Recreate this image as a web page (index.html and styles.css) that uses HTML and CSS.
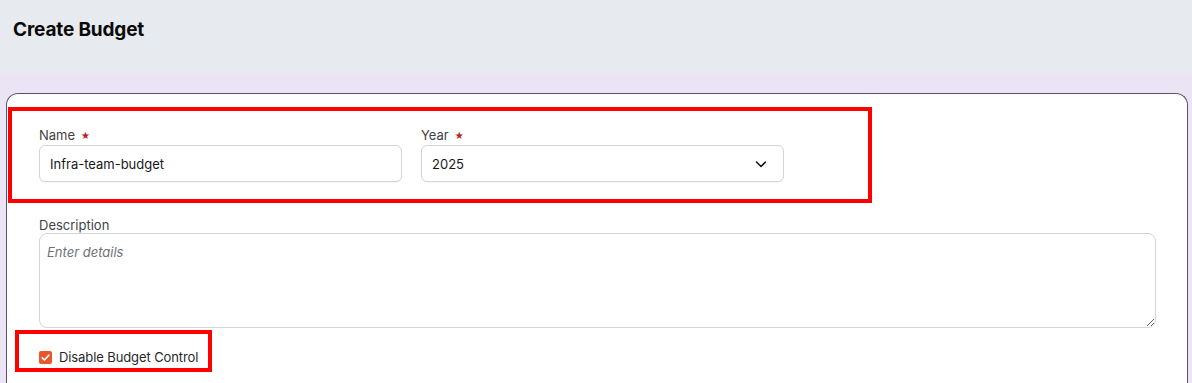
FILE: index.html
```html
<!DOCTYPE html>
<html lang="en">
<head>
<meta charset="utf-8">
<title>Create Budget</title>
<link rel="stylesheet" href="styles.css">
</head>
<body>
<header class="page-header">
  <h1 class="page-title">Create Budget</h1>
</header>
<main class="page-main">
  <section class="card">
    <div class="row">
      <div class="field">
        <label class="label">Name <span class="req">★</span></label>
        <input class="input" type="text" value="Infra-team-budget">
      </div>
      <div class="field">
        <label class="label">Year <span class="req">★</span></label>
        <div class="select">
          <span class="select-value">2025</span>
          <svg class="chevron" width="14" height="14" viewBox="0 0 14 14"><path d="M2.5 5 L7 9.5 L11.5 5" fill="none" stroke="#18181b" stroke-width="1.6" stroke-linecap="round" stroke-linejoin="round"/></svg>
        </div>
      </div>
    </div>
    <div class="field field-desc">
      <label class="label">Description</label>
      <textarea class="textarea" placeholder="Enter details"></textarea>
    </div>
    <label class="check">
      <span class="box"><svg width="13" height="13" viewBox="0 0 13 13"><path d="M3.2 6.8 L5.4 9 L9.8 4.2" fill="none" stroke="#fff" stroke-width="1.7" stroke-linecap="round" stroke-linejoin="round"/></svg></span>
      <span class="check-text">Disable Budget Control</span>
    </label>
    <div class="mark mark-1"></div>
    <div class="mark mark-2"></div>
  </section>
</main>
</body>
</html>
```

FILE: styles.css
```css
* { box-sizing: border-box; }
html, body { margin: 0; padding: 0; }
body {
  font-family: Inter, "Noto Sans", sans-serif;
  background: #ebe4f4;
  height: 383px;
  overflow: hidden;
}
.page-header {
  background: #e7eaee;
  height: 73px;
  padding: 18px 13px 0;
}
.page-title {
  margin: 0;
  font-size: 19px;
  font-weight: 700;
  letter-spacing: -0.15px;
  color: #0a0a0a;
}
.page-main {
  padding: 20px 4px 0 6px;
}
.card {
  position: relative;
  background: #fff;
  border: 1px solid #5d5070;
  border-bottom: none;
  border-radius: 12px 12px 0 0;
  height: 290px;
  padding: 33px 31px 0 32px;
}
.row {
  display: grid;
  grid-template-columns: 363px 363px;
  column-gap: 19px;
}
.field { display: flex; flex-direction: column; }
.label {
  font-size: 13px;
  line-height: 16px;
  color: #3f3f46;
  margin-bottom: 0;
}
.req {
  color: #b42318;
  font-size: 9px;
  position: relative;
  top: -1px;
  margin-left: 2px;
}
.input, .select {
  height: 37px;
  border: 1px solid #d4d4d8;
  border-radius: 6px;
  font-family: inherit;
  font-size: 13px;
  color: #18181b;
  padding: 0 10px;
  background: #fff;
  box-shadow: 0 1px 1px rgba(0,0,0,0.04);
}
.input { outline: none; }
.select {
  display: flex;
  align-items: center;
  justify-content: space-between;
  padding: 0 15px 0 10px;
}
.chevron { display: block; }
.field-desc { margin-top: 35px; }
.textarea {
  width: 1117px;
  height: 95px;
  border: 1px solid #d4d4d8;
  border-radius: 8px;
  font-family: inherit;
  font-size: 13px;
  padding: 10px 7px;
  resize: vertical;
  outline: none;
}
.textarea::placeholder { color: #71717a; font-style: italic; }
.check {
  display: flex;
  align-items: center;
  gap: 7px;
  margin-top: 21px;
}
.box {
  width: 13px;
  height: 13px;
  border-radius: 2px;
  background: #e8572a;
  display: flex;
}
.check-text {
  font-size: 13px;
  letter-spacing: -0.1px;
  color: #27272a;
}
.mark {
  position: absolute;
  border: 4px solid #ff0000;
  pointer-events: none;
}
.mark-1 { left: 1px; top: 13px; width: 864px; height: 96px; }
.mark-2 { left: 8px; top: 236px; width: 197px; height: 42px; }
```
